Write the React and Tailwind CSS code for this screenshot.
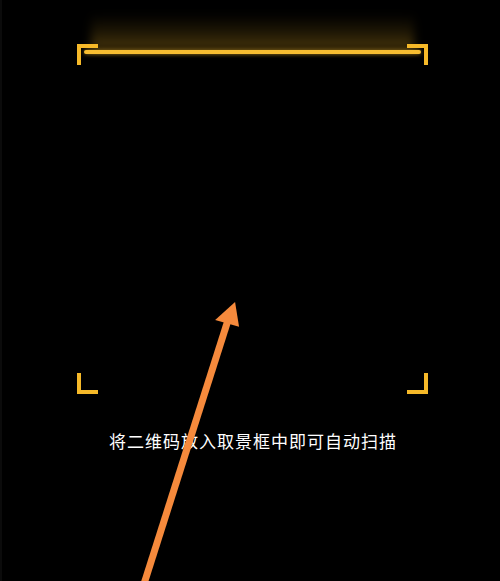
import React from 'react';

const Corner = ({ className }) => (
    <div className={`absolute w-[21px] h-[21px] border-[#f6b929] ${className}`} />
);

const App = () => {
    return (
        <div className="relative w-full h-[581px] bg-black overflow-hidden flex flex-col items-center border-l-2 border-[#0b0b0b]">
            <div className="relative mt-[44px] ml-[3px] w-[351px] h-[350px] shrink-0">
                <Corner className="left-0 top-0 border-t-4 border-l-4" />
                <Corner className="right-0 top-0 border-t-4 border-r-4" />
                <Corner className="left-0 bottom-0 border-b-4 border-l-4" />
                <Corner className="right-0 bottom-0 border-b-4 border-r-4" />

                {/* scan line + glow */}
                <div className="absolute left-[14px] right-[14px] top-[-30px] h-[36px] bg-gradient-to-t from-[#f5b826]/30 via-[#f5b826]/12 to-transparent blur-[5px]" />
                <div className="absolute left-[7px] right-[7px] top-[6px] h-[4px] rounded-full bg-[#f7bd31] shadow-[0_0_4px_rgba(247,189,49,0.6)]" />
            </div>

            <p
                className="mt-[34px] ml-[4px] text-white text-[17px] leading-[26px] tracking-[1px]"
                style={{ fontFamily: '"Noto Sans CJK SC", "Noto Sans", sans-serif' }}
            >
                将二维码放入取景框中即可自动扫描
            </p>

            <svg className="absolute inset-0 w-full h-full pointer-events-none" viewBox="0 0 500 581">
                <line x1="141" y1="590" x2="227" y2="320" stroke="#f68a3c" strokeWidth="7" />
                <polygon points="234,302 214,320 238,327" fill="#f68a3c" />
            </svg>
        </div>
    );
};

export default App;
